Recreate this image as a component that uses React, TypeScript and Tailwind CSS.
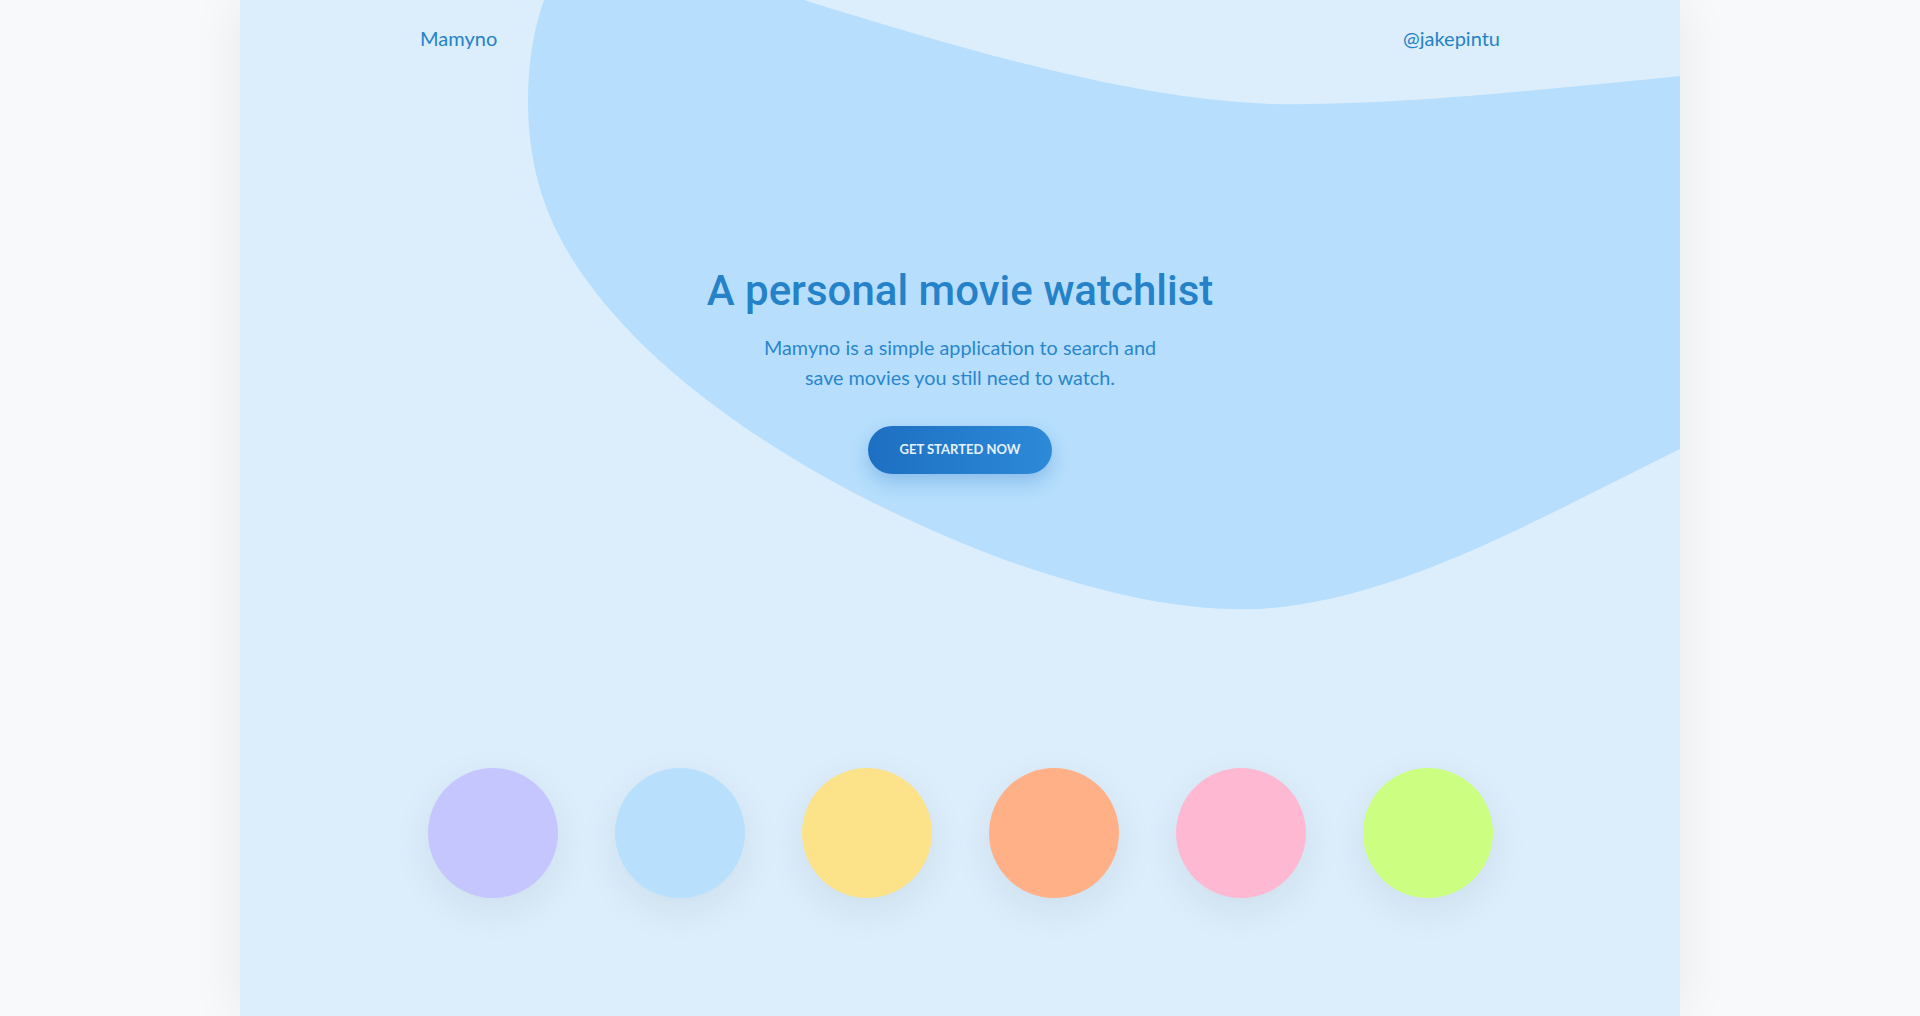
const swatches = ['#c5c6fe', '#b8e0fd', '#fce38a', '#ffb086', '#ffb8d2', '#ccff81']

function Blob() {
  return (
    <svg
      className="pointer-events-none absolute left-0 top-0"
      width="1440"
      height="1016"
      viewBox="0 0 1440 1016"
    >
      <path
        d="M 304 0 C 284 55 282 135 302 195 C 345 330 525 470 765 560 C 865 595 945 612 1020 609 C 1160 600 1305 515 1440 449 L 1440 76 C 1300 90 1150 106 1033 104 C 900 100 740 55 564 0 Z"
        fill="#b7dffd"
      />
    </svg>
  )
}

export default function App() {
  return (
    <div className="min-h-screen bg-[#f8f9fa]" style={{ fontFamily: 'Lato, "Noto Sans", sans-serif' }}>
      <div className="relative mx-auto min-h-screen w-[1440px] overflow-hidden bg-[#dceefc] shadow-[0_0_50px_rgba(0,0,0,0.07)]">
        <Blob />

        <div className="relative flex flex-col">
          {/* Nav */}
          <nav className="flex h-[76px] items-start justify-between px-[180px] pt-[26px] text-[20px] leading-[24px] text-[#2582c8]">
            <a href="#">Mamyno</a>
            <a href="#">@jakepintu</a>
          </nav>

          {/* Hero */}
          <section className="mt-[190px] flex flex-col items-center text-center">
            <h1 className="font-['Roboto',sans-serif] text-[42px] font-medium leading-[50px] text-[#2582c8]">
              A personal movie watchlist
            </h1>
            <p className="mt-[16px] w-[410px] text-[19.8px] leading-[30px] text-[#2a86cc]">
              Mamyno is a simple application to search and save movies you still need to watch.
            </p>
            <button className="mt-[34px] h-[48px] w-[184px] rounded-full bg-gradient-to-r from-[#1d6fc2] to-[#2d8ad8] text-[13px] font-bold text-[#e6f2ff] shadow-[0_8px_20px_rgba(30,110,190,0.3)]">
              GET STARTED NOW
            </button>
          </section>

          {/* Colour swatches */}
          <div className="mt-[294px] flex justify-center gap-[57px] pb-[118px]">
            {swatches.map((c) => (
              <div
                key={c}
                className="h-[130px] w-[130px] rounded-full shadow-[0_12px_40px_rgba(0,0,0,0.07)]"
                style={{ backgroundColor: c }}
              />
            ))}
          </div>
        </div>
      </div>
    </div>
  )
}
